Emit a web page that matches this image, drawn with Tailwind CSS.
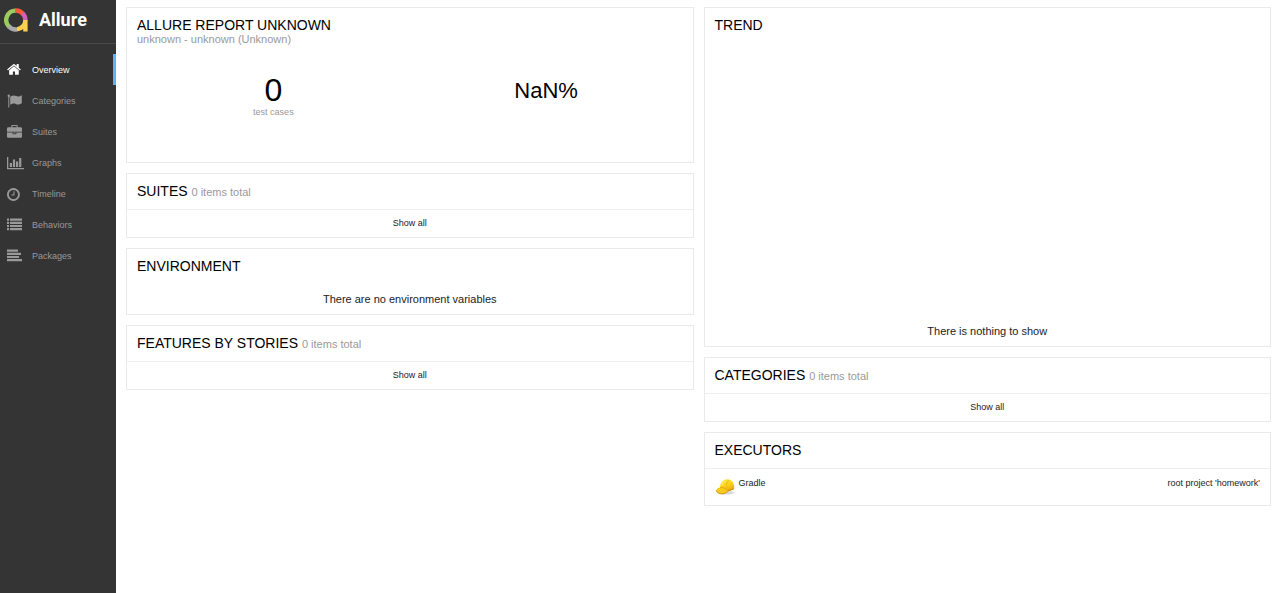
<!DOCTYPE html>
<html lang="en">
<head>
    <meta charset="UTF-8">
    <meta name="viewport" content="width=device-width, initial-scale=1.0">
    <title>Allure Report</title>
    <script src="https://cdn.jsdelivr.net/npm/@tailwindcss/browser@4"></script>
</head>
<body class="flex min-h-screen bg-white font-['Liberation_Sans',Arial,sans-serif] text-[11px] text-[#222]">
    <!-- Sidebar -->
    <aside class="w-[116px] shrink-0 bg-[#343434] text-[#999]">
        <a href="#" class="flex h-11 items-center gap-[11px] border-b border-[#4a4a4a] pb-1 pl-1 text-white">
            <svg class="h-6 w-6" viewBox="0 0 24 24" fill="none" stroke-width="4.4">
                <path d="M5.2 18.8A9.4 9.4 0 0 1 12 2.600" stroke="#97cc64"/>
                <path d="M11 2.600A9.4 9.4 0 0 1 19.4 6.400" stroke="#fd5a3e"/>
                <path d="M18.8 5.600A9.4 9.4 0 0 1 21.4 12.600" stroke="#d35ebe"/>
                <path d="M4.800 18.2A9.4 9.4 0 0 0 13 21.4" stroke="#aaa"/>
                <path d="M13 21.4A9.4 9.4 0 0 0 21.4 12V23.6" stroke="#ffd050"/>
            </svg>
            <span class="font-['Roboto',sans-serif] text-[18px] font-bold">Allure</span>
        </a>
        <nav class="pt-[10px] text-[9px]">
            <a href="#" class="flex h-[31px] items-center gap-2 border-r-3 border-[#5fb1f3] pt-0.5 pl-[7px] text-white">
                <svg class="h-[15px] w-[17px]" viewBox="64 128 2032 1792" fill="currentColor"><path d="M1472 992v480q0 26-19 45t-45 19h-384v-384h-256v384h-384q-26 0-45-19t-19-45v-480q0-1 .5-3t.5-3l575-474 575 474q1 2 1 6zm223-69l-62 74q-8 9-21 11h-3q-13 0-21-7l-692-577-692 577q-12 8-24 7-13-2-21-11l-62-74q-8-10-7-23.5t11-21.5l719-599q32-26 76-26t76 26l244 204v-195q0-14 9-23t23-9h192q14 0 23 9t9 23v408l219 182q10 8 11 21.5t-7 23.5z"/></svg>
                Overview
            </a>
            <a href="#" class="flex h-[31px] items-center gap-2 pt-0.5 pl-[7px]">
                <svg class="h-[15px] w-[17px]" viewBox="0 0 17 15" fill="currentColor">
                    <circle cx="1.8" cy="1.8" r="1.2"/>
                    <path d="M1.3 1.500h1v12h-1zM3.2 2.700C5.500 1.200 7.200 1 9.200 2.100 11 3 12.500 2.400 14.800 1.300V9.300C12.300 10.600 10.700 11 8.800 9.900 7 9 5.400 9.500 3.200 10.800z"/>
                </svg>
                Categories
            </a>
            <a href="#" class="flex h-[31px] items-center gap-2 pt-0.5 pl-[7px]">
                <svg class="h-[15px] w-[17px]" viewBox="0 0 2032 1792" fill="currentColor"><path d="M640 256h512v-128h-512v128zm1152 640v480q0 66-47 113t-113 47h-1472q-66 0-113-47t-47-113v-480h672v160q0 26 19 45t45 19h320q26 0 45-19t19-45v-160h672zm-768 0v128h-256v-128h256zm768-480v384h-1792v-384q0-66 47-113t113-47h352v-160q0-40 28-68t68-28h576q40 0 68 28t28 68v160h352q66 0 113 47t47 113z"/></svg>
                Suites
            </a>
            <a href="#" class="flex h-[31px] items-center gap-2 pt-0.5 pl-[7px]">
                <svg class="h-[15px] w-[17px]" viewBox="0 0 17 15" fill="currentColor"><path d="M0 1h1.300v11h15.700v1.300H0zM2.800 7h2.200v4H2.800zM5.900 3.500h2.200v7.500H5.900zM9 5.500h2.200v5.500H9zM12.100 2h2.200v9h-2.200z"/></svg>
                Graphs
            </a>
            <a href="#" class="flex h-[31px] items-center gap-2 pt-0.5 pl-[7px]">
                <svg class="h-[15px] w-[17px]" viewBox="128 0 2032 1792" fill="currentColor"><path d="M1024 544v448q0 14-9 23t-23 9h-320q-14 0-23-9t-9-23v-64q0-14 9-23t23-9h224v-352q0-14 9-23t23-9h64q14 0 23 9t9 23zm416 352q0-148-73-273t-198-198-273-73-273 73-198 198-73 273 73 273 198 198 273 73 273-73 198-198 73-273zm224 0q0 209-103 385.500t-279.500 279.500-385.500 103-385.500-103-279.500-279.500-103-385.500 103-385.500 279.500-279.500 385.500-103 385.500 103 279.500 279.500 103 385.500z"/></svg>
                Timeline
            </a>
            <a href="#" class="flex h-[31px] items-center gap-2 pt-0.5 pl-[7px]">
                <svg class="h-[15px] w-[17px]" viewBox="0 0 17 15" fill="currentColor"><path d="M0 .5h2v2.200H0zM3 .5h12v2.200H3zM0 3.700h2v2.200H0zM3 3.700h12v2.200H3zM0 6.900h2v2.200H0zM3 6.900h12v2.200H3zM0 10.100h2v2.200H0zM3 10.100h12v2.200H3z"/></svg>
                Behaviors
            </a>
            <a href="#" class="flex h-[31px] items-center gap-2 pt-0.5 pl-[7px]">
                <svg class="h-[15px] w-[17px]" viewBox="0 0 17 15" fill="currentColor"><path d="M0 .5h11v2.200H0zM0 3.700h14v2.200H0zM0 6.900h12v2.200H0zM0 10.100h15v2.200H0z"/></svg>
                Packages
            </a>
        </nav>
    </aside>

    <!-- Widgets -->
    <main class="grid flex-1 grid-cols-2 items-start gap-[10px] pt-[7px] pr-[9px] pl-[10px]">
        <div class="flex flex-col gap-[10px]">
            <!-- Summary -->
            <section class="min-h-[156px] border border-[#eaeaea] p-[10px]">
                <h2 class="text-[14px] leading-[14px] text-black">ALLURE REPORT UNKNOWN</h2>
                <p class="leading-[14px] text-[#999]">unknown - unknown (Unknown)</p>
                <div class="grid grid-cols-2 pt-7 text-center text-black">
                    <div>
                        <div class="text-[32px] leading-8">0</div>
                        <div class="text-[9px] leading-3 text-[#999]">test cases</div>
                    </div>
                    <div class="text-[22px] leading-[34px]">NaN%</div>
                </div>
            </section>

            <!-- Suites -->
            <section class="border border-[#eaeaea]">
                <h2 class="px-[10px] text-[14px] leading-[35px] text-black">SUITES <span class="text-[11px] leading-none text-[#999]">0 items total</span></h2>
                <a href="#" class="block border-t border-[#eee] text-center text-[9px] leading-[27px]">Show all</a>
            </section>

            <!-- Environment -->
            <section class="border border-[#eaeaea]">
                <h2 class="px-[10px] text-[14px] leading-[35px] text-black">ENVIRONMENT</h2>
                <p class="text-center leading-[30px]">There are no environment variables</p>
            </section>

            <!-- Features by stories -->
            <section class="border border-[#eaeaea]">
                <h2 class="px-[10px] text-[14px] leading-[35px] text-black">FEATURES BY STORIES <span class="text-[11px] leading-none text-[#999]">0 items total</span></h2>
                <a href="#" class="block border-t border-[#eee] text-center text-[9px] leading-[27px]">Show all</a>
            </section>
        </div>

        <div class="flex flex-col gap-[10px]">
            <!-- Trend -->
            <section class="flex min-h-[340px] flex-col justify-between border border-[#eaeaea]">
                <h2 class="px-[10px] text-[14px] leading-[35px] text-black">TREND</h2>
                <p class="text-center leading-[30px]">There is nothing to show</p>
            </section>

            <!-- Categories -->
            <section class="border border-[#eaeaea]">
                <h2 class="px-[10px] text-[14px] leading-[35px] text-black">CATEGORIES <span class="text-[11px] leading-none text-[#999]">0 items total</span></h2>
                <a href="#" class="block border-t border-[#eee] text-center text-[9px] leading-[27px]">Show all</a>
            </section>

            <!-- Executors -->
            <section class="border border-[#eaeaea]">
                <h2 class="px-[10px] text-[14px] leading-[35px] text-black">EXECUTORS</h2>
                <div class="flex items-start gap-1 border-t border-[#eee] px-[10px] py-2 text-[9px] leading-[13px]">
                    <svg class="h-5 w-5" viewBox="0 0 20 20">
                        <defs>
                            <linearGradient id="helmet" x1="0.2" y1="0" x2="0.8" y2="1">
                                <stop offset="0" stop-color="#ffe838"/>
                                <stop offset="0.6" stop-color="#fbc918"/>
                                <stop offset="1" stop-color="#d9960c"/>
                            </linearGradient>
                        </defs>
                        <ellipse cx="11" cy="15.800" rx="8" ry="1.800" fill="#000" opacity="0.15"/>
                        <path d="M5 10.800C5 6 7.800 2.400 12 2.200 16.500 2 19.200 5.800 19.200 10.400 19.200 12.300 17.500 13 14.800 13.800L10.500 15z" fill="url(#helmet)"/>
                        <path d="M1.200 13.200C1.600 11.800 3.400 10.600 5.200 10.300 8.400 10 11 11.200 13.500 13.800 11.500 15.800 9.300 17 6.700 16.900 3.800 16.800 .9 15.200 1.200 13.200z" fill="#f8cb1c"/>
                        <path d="M1.200 13.400C1.600 15.700 4.500 16.900 7 16.900 9.500 16.900 11.800 15.500 13.500 13.900L19 11.800" fill="none" stroke="#bd7f0e" stroke-width="0.700"/>
                        <path d="M5.200 10.600C8 10 11.200 11.600 13.200 13.700" fill="none" stroke="#d79a10" stroke-width="0.700"/>
                        <path d="M11.200 11C11.200 7.400 12.200 4.700 13.800 2.800" fill="none" stroke="#e8ad12" stroke-width="0.600"/>
                        <path d="M7 7.800C7.600 6 8.500 4.900 9.800 4.100" fill="none" stroke="#fff59a" stroke-width="1" stroke-linecap="round"/>
                    </svg>
                    <span class="flex-1">Gradle</span>
                    <a href="#">root project 'homework'</a>
                </div>
            </section>
        </div>
    </main>
</body>
</html>
